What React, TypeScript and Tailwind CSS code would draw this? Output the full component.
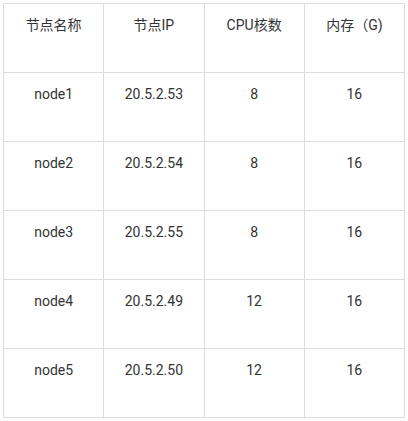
const headers = ["节点名称", "节点IP", "CPU核数", "内存（G)"];

const nodes = [
  { name: "node1", ip: "20.5.2.53", cpu: 8, mem: 16 },
  { name: "node2", ip: "20.5.2.54", cpu: 8, mem: 16 },
  { name: "node3", ip: "20.5.2.55", cpu: 8, mem: 16 },
  { name: "node4", ip: "20.5.2.49", cpu: 12, mem: 16 },
  { name: "node5", ip: "20.5.2.50", cpu: 12, mem: 16 },
];

const cell = "border border-[#dddddd] h-[69px] align-top pt-[10px] text-center font-normal";

export default function App() {
  return (
    <div className="bg-white w-[408px] h-[421px] p-[3px] text-[14px] leading-[22px] text-[#333333] [font-family:Roboto,'Noto_Sans_CJK_SC',sans-serif]">
      <table className="w-[402px] border-collapse table-fixed">
        <thead>
          <tr>
            {headers.map((h) => (
              <th key={h} className={cell}>
                {h}
              </th>
            ))}
          </tr>
        </thead>
        <tbody>
          {nodes.map((n) => (
            <tr key={n.name}>
              <td className={cell}>{n.name}</td>
              <td className={cell}>{n.ip}</td>
              <td className={cell}>{n.cpu}</td>
              <td className={cell}>{n.mem}</td>
            </tr>
          ))}
        </tbody>
      </table>
    </div>
  );
}
